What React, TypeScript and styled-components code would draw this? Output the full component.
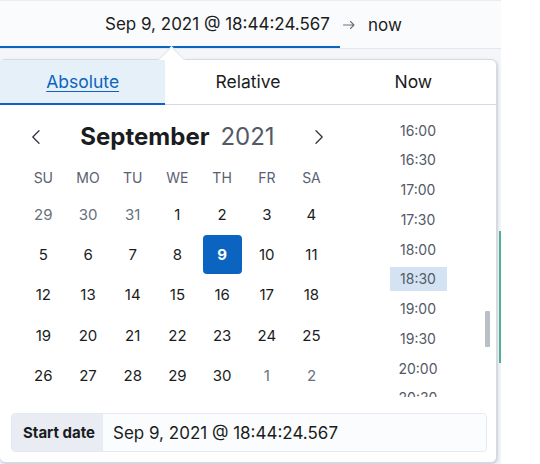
import React from 'react';
import styled, { createGlobalStyle } from 'styled-components';

const GlobalStyle = createGlobalStyle`
  html, body { margin: 0; padding: 0; background: #ffffff; }
  body {
    font-family: Inter, "Noto Sans", "Liberation Sans", sans-serif;
    color: #1a1c21;
    -webkit-font-smoothing: antialiased;
  }
  * { box-sizing: border-box; }
`;

const Page = styled.div`
  position: relative;
  width: 540px;
  height: 464px;
  overflow: hidden;
  background: #ffffff;
`;

const Backdrop = styled.div`
  width: 501px;
  height: 464px;
  display: flex;
  flex-direction: column;
`;

const TopBar = styled.div`
  height: 48px;
  display: flex;
  align-items: stretch;
  background: #fafbfd;
  border-top: 1px solid #e9edf3;
`;

const StartButton = styled.div`
  width: 340px;
  display: flex;
  align-items: center;
  justify-content: flex-end;
  padding-right: 10px;
  font-size: 17px;
  color: #1a1c21;
  border-bottom: 2px solid #0b64c0;
`;

const ArrowSep = styled.div`
  width: 18px;
  display: flex;
  align-items: center;
  justify-content: center;
  color: #69707d;
`;

const EndButton = styled.div`
  display: flex;
  align-items: center;
  padding-left: 10px;
  font-size: 17px;
  color: #1a1c21;
`;

const Lower = styled.div`
  flex: 1;
  display: flex;
  justify-content: flex-end;
  background: #f4f6fa;
  border-top: 1px solid #e3e8f0;
`;

const GreenMark = styled.div`
  width: 2px;
  height: 132px;
  margin-top: 182px;
  background: #54b399;
`;

const Popover = styled.div`
  position: absolute;
  top: 59px;
  left: -1px;
  width: 498px;
  height: 404px;
  display: flex;
  flex-direction: column;
  background: #ffffff;
  border: 1px solid #d3dae6;
  border-radius: 6px;
  box-shadow: 1px 1px 2px rgba(0, 0, 0, 0.12), 0 3px 8px rgba(0, 0, 0, 0.06);
`;

const PopArrow = styled.div`
  position: absolute;
  top: -10px;
  left: 162px;
  width: 19px;
  height: 19px;
  background: #ffffff;
  border-top: 1px solid #dfe4ec;
  border-left: 1px solid #dfe4ec;
  transform: rotate(45deg);
  z-index: 2;
`;

const TabList = styled.div`
  position: relative;
  z-index: 3;
  height: 45px;
  display: flex;
  box-shadow: inset 0 -1px 0 #d3dae6;
  border-top-right-radius: 6px;
  overflow: hidden;
`;

const Tab = styled.div<{ $active?: boolean }>`
  flex: 1;
  display: flex;
  align-items: center;
  justify-content: center;
  font-size: 17.5px;
  color: ${(p) => (p.$active ? '#0b64c0' : '#1a1c21')};
  text-decoration: ${(p) => (p.$active ? 'underline' : 'none')};
  text-underline-offset: 3px;
  text-decoration-thickness: 1px;
  background: ${(p) => (p.$active ? '#e6f0f8' : 'transparent')};
  border-bottom: 2px solid ${(p) => (p.$active ? '#0b64c0' : 'transparent')};
`;

const Body = styled.div`
  height: 292px;
  display: flex;
`;

const CalendarPane = styled.div`
  width: 340px;
  padding: 12px 0 0 21px;
`;

const Header = styled.div`
  width: 313px;
  height: 40px;
  margin-bottom: 3px;
  display: flex;
  align-items: center;
  justify-content: space-between;
`;

const NavButton = styled.div`
  width: 30px;
  height: 30px;
  display: flex;
  align-items: center;
  justify-content: center;
  color: #343741;
`;

const Title = styled.div`
  display: flex;
  align-items: baseline;
  gap: 11px;
  font-size: 24px;
  line-height: 30px;
`;

const Month = styled.span`
  font-weight: 700;
  color: #1a1c21;
`;

const Year = styled.span`
  font-weight: 400;
  color: #535966;
`;

const Grid = styled.div`
  display: grid;
  grid-template-columns: repeat(7, 44.7px);
`;

const WeekDay = styled.div`
  height: 34px;
  display: flex;
  align-items: center;
  justify-content: center;
  font-size: 14px;
  color: #5a6170;
`;

const DayCell = styled.div`
  height: 40.4px;
  display: flex;
  align-items: center;
  justify-content: center;
`;

const Day = styled.div<{ $muted?: boolean; $selected?: boolean }>`
  width: 39px;
  height: 39px;
  display: flex;
  align-items: center;
  justify-content: center;
  border-radius: 4px;
  font-size: 15px;
  font-weight: ${(p) => (p.$selected ? 700 : 400)};
  color: ${(p) => (p.$selected ? '#ffffff' : p.$muted ? '#69707d' : '#1a1c21')};
  background: ${(p) => (p.$selected ? '#0b64c0' : 'transparent')};
`;

const TimePane = styled.div`
  position: relative;
  flex: 1;
  padding-top: 3px;
`;

const TimeList = styled.div`
  height: 289px;
  overflow: hidden;
  display: flex;
  flex-direction: column;
  align-items: center;
  gap: 5.75px;
  padding-top: 10px;
`;

const TimeItem = styled.div<{ $selected?: boolean }>`
  flex: none;
  width: 57px;
  height: 24px;
  display: flex;
  align-items: center;
  justify-content: center;
  font-size: 14px;
  color: #535966;
  background: ${(p) => (p.$selected ? '#d3e3f3' : 'transparent')};
`;

const ScrollThumb = styled.div`
  position: absolute;
  left: 145px;
  top: 206px;
  width: 5px;
  height: 36px;
  border-radius: 1px;
  background: #babec5;
`;

const Footer = styled.div`
  padding: 16px 9px 10px 11px;
`;

const FormControl = styled.div`
  height: 39px;
  display: flex;
  border: 1px solid #e3e8f2;
  border-radius: 4px;
  overflow: hidden;
`;

const Prepend = styled.div`
  width: 91px;
  display: flex;
  align-items: center;
  padding-left: 11px;
  background: #e9edf3;
  font-size: 15px;
  font-weight: 700;
  color: #1a1c21;
  white-space: nowrap;
`;

const DateInput = styled.div`
  flex: 1;
  display: flex;
  align-items: center;
  padding-left: 10px;
  background: #fbfcfd;
  font-size: 17px;
  color: #1a1c21;
`;

const ChevronLeft = () => (
  <svg width="12" height="16" viewBox="0 0 12 16" fill="none">
    <polyline points="9,1.8 2.8,8 9,14.2" stroke="currentColor" strokeWidth="1.3" strokeLinecap="round" strokeLinejoin="round" />
  </svg>
);

const ChevronRight = () => (
  <svg width="12" height="16" viewBox="0 0 12 16" fill="none">
    <polyline points="3,1.8 9.2,8 3,14.2" stroke="currentColor" strokeWidth="1.3" strokeLinecap="round" strokeLinejoin="round" />
  </svg>
);

const ArrowRight = () => (
  <svg width="14" height="10" viewBox="0 0 14 10" fill="none">
    <path d="M1.5 5h10.5M8.5 1.5L12 5 8.5 8.5" stroke="currentColor" strokeWidth="1.1" strokeLinecap="round" strokeLinejoin="round" />
  </svg>
);

const weekDays = ['SU', 'MO', 'TU', 'WE', 'TH', 'FR', 'SA'];

type DayInfo = { n: number; muted: boolean };
const days: DayInfo[] = [
  { n: 29, muted: true },
  { n: 30, muted: true },
  { n: 31, muted: true },
  ...Array.from({ length: 30 }, (_, i) => ({ n: i + 1, muted: false })),
  { n: 1, muted: true },
  { n: 2, muted: true },
];

// visible window of the scrolled time list
const times = Array.from({ length: 10 }, (_, i) => {
  const idx = 32 + i;
  const h = Math.floor(idx / 2);
  const m = idx % 2 ? '30' : '00';
  return `${h.toString().padStart(2, '0')}:${m}`;
});

export default function App() {
  return (
    <>
      <GlobalStyle />
      <Page>
        <Backdrop>
          <TopBar>
            <StartButton>Sep 9, 2021 @ 18:44:24.567</StartButton>
            <ArrowSep>
              <ArrowRight />
            </ArrowSep>
            <EndButton>now</EndButton>
          </TopBar>
          <Lower>
            <GreenMark />
          </Lower>
        </Backdrop>

        <Popover>
          <PopArrow />
          <TabList>
            <Tab $active>Absolute</Tab>
            <Tab>Relative</Tab>
            <Tab>Now</Tab>
          </TabList>
          <Body>
            <CalendarPane>
              <Header>
                <NavButton>
                  <ChevronLeft />
                </NavButton>
                <Title>
                  <Month>September</Month>
                  <Year>2021</Year>
                </Title>
                <NavButton>
                  <ChevronRight />
                </NavButton>
              </Header>
              <Grid>
                {weekDays.map((d) => (
                  <WeekDay key={d}>{d}</WeekDay>
                ))}
                {days.map((d, i) => (
                  <DayCell key={i}>
                    <Day $muted={d.muted} $selected={!d.muted && d.n === 9}>
                      {d.n}
                    </Day>
                  </DayCell>
                ))}
              </Grid>
            </CalendarPane>
            <TimePane>
              <TimeList>
                {times.map((t) => (
                  <TimeItem key={t} $selected={t === '18:30'}>
                    {t}
                  </TimeItem>
                ))}
              </TimeList>
              <ScrollThumb />
            </TimePane>
          </Body>
          <Footer>
            <FormControl>
              <Prepend>Start date</Prepend>
              <DateInput>Sep 9, 2021 @ 18:44:24.567</DateInput>
            </FormControl>
          </Footer>
        </Popover>
      </Page>
    </>
  );
}
